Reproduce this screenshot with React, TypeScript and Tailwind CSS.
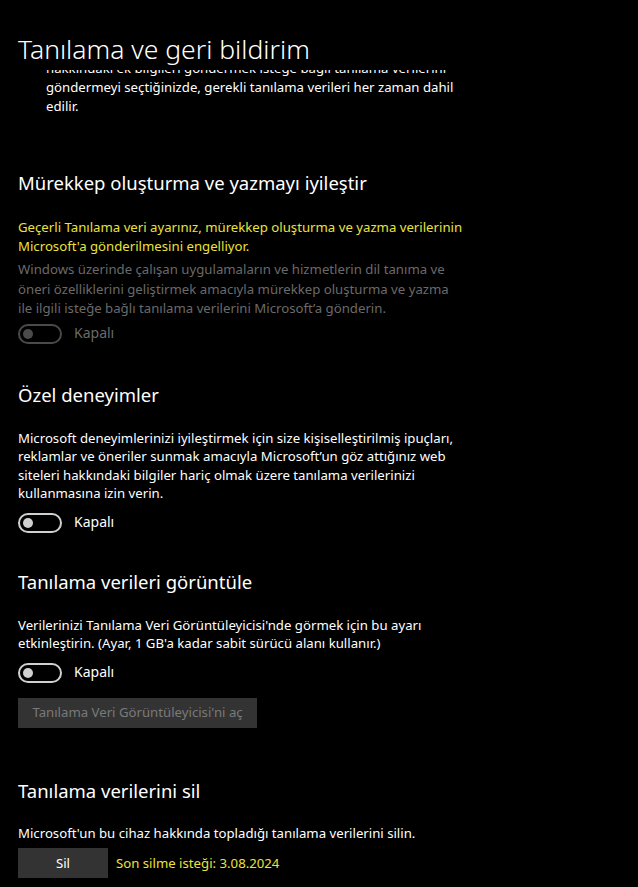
import React from "react";

function Toggle({ disabled }: { disabled?: boolean }) {
  return (
    <div className="flex items-center gap-3 h-5">
      <div
        className={
          "w-11 h-5 rounded-full border-2 flex items-center pl-[3px] " +
          (disabled ? "border-[#4a4a4a]" : "border-[#d0d0d0]")
        }
      >
        <div className={"w-[10px] h-[10px] rounded-full " + (disabled ? "bg-[#4a4a4a]" : "bg-[#d0d0d0]")} />
      </div>
      <span className={"text-[14px] " + (disabled ? "text-[#6a6a6a]" : "text-white")}>Kapalı</span>
    </div>
  );
}

export default function App() {
  return (
    <div className="w-[638px] h-[887px] bg-black text-white overflow-hidden font-['Noto_Sans',sans-serif] text-[13.2px] leading-[18.5px]">
      {/* page title */}
      <div className="relative z-10 h-[70px] bg-black px-[18px] pt-[33px]">
        <h1 className="text-[26.5px] leading-[32px] font-light">Tanılama ve geri bildirim</h1>
      </div>

      <div className="px-[18px]">
        <p className="-mt-[11px] pl-[28px] w-[465px] leading-[19px]">
          hakkındaki ek bilgileri göndermek isteğe bağlı tanılama verilerini
          göndermeyi seçtiğinizde, gerekli tanılama verileri her zaman dahil edilir.
        </p>

        {/* ink */}
        <h2 className="mt-[54px] text-[18.5px] leading-[26px]">Mürekkep oluşturma ve yazmayı iyileştir</h2>
        <p className="mt-[22px] text-[#ece23c] w-[450px]">
          Geçerli Tanılama veri ayarınız, mürekkep oluşturma ve yazma verilerinin Microsoft'a gönderilmesini engelliyor.
        </p>
        <p className="mt-[5px] text-[#6a6a6a] w-[440px] leading-[19.5px]">
          Windows üzerinde çalışan uygulamaların ve hizmetlerin dil tanıma ve öneri özelliklerini geliştirmek amacıyla mürekkep oluşturma ve yazma ile ilgili isteğe bağlı tanılama verilerini Microsoft’a gönderin.
        </p>
        <div className="mt-[5px]">
          <Toggle disabled />
        </div>

        {/* tailored */}
        <h2 className="mt-[38px] text-[18.5px] leading-[26px]">Özel deneyimler</h2>
        <p className="mt-[21px] w-[450px]">
          Microsoft deneyimlerinizi iyileştirmek için size kişiselleştirilmiş ipuçları, reklamlar ve öneriler sunmak amacıyla Microsoft’un göz attığınız web siteleri hakkındaki bilgiler hariç olmak üzere tanılama verilerinizi kullanmasına izin verin.
        </p>
        <div className="mt-[10px]">
          <Toggle />
        </div>

        {/* viewer */}
        <h2 className="mt-[36px] text-[18.5px] leading-[26px]">Tanılama verileri görüntüle</h2>
        <p className="mt-[21px] w-[450px]">
          Verilerinizi Tanılama Veri Görüntüleyicisi'nde görmek için bu ayarı etkinleştirin. (Ayar, 1 GB'a kadar sabit sürücü alanı kullanır.)
        </p>
        <div className="mt-[10px]">
          <Toggle />
        </div>
        <button className="mt-[15px] h-[30px] w-[239px] bg-[#333333] text-[#7a7a7a] text-[13.2px]">
          Tanılama Veri Görüntüleyicisi'ni aç
        </button>

        {/* delete */}
        <h2 className="mt-[50px] text-[18.5px] leading-[26px]">Tanılama verilerini sil</h2>
        <p className="mt-[20px]">Microsoft'un bu cihaz hakkında topladığı tanılama verilerini silin.</p>
        <div className="mt-[6px] flex items-center gap-2">
          <button className="h-[30px] w-[90px] bg-[#333333] text-white text-[13.2px]">Sil</button>
          <span className="text-[#ece23c]">Son silme isteği: 3.08.2024</span>
        </div>
      </div>
    </div>
  );
}
